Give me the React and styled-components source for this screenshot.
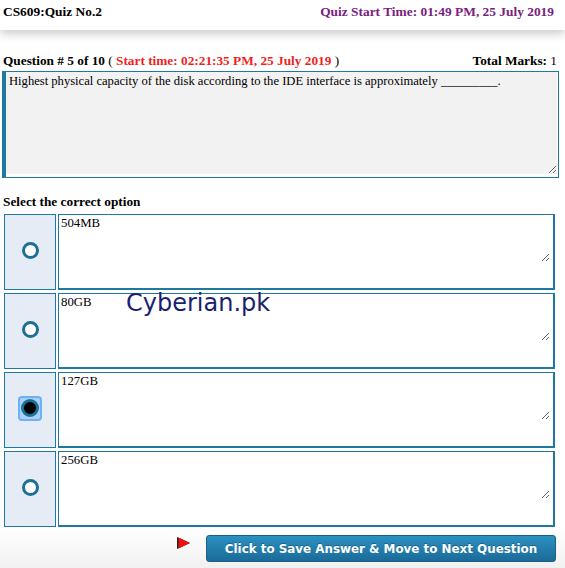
import React from "react";
import styled, { createGlobalStyle } from "styled-components";

const GlobalStyle = createGlobalStyle`
  body {
    margin: 0;
    background: #fff;
    font-family: "Liberation Serif", "Times New Roman", serif;
    color: #000;
  }
`;

const Page = styled.div`
  width: 565px;
  height: 568px;
  overflow: hidden;
  position: relative;
  display: flex;
  flex-direction: column;
`;

const Header = styled.div`
  height: 30px;
  display: flex;
  justify-content: space-between;
  align-items: flex-start;
  padding: 4px 11px 0 3px;
  box-sizing: border-box;
  background: #fff;
  box-shadow: 0 4px 10px rgba(0, 0, 0, 0.2);
  font-size: 13.4px;
  font-weight: bold;
`;

const StartTime = styled.span`
  color: #7a2080;
`;

const QuestionBar = styled.div`
  margin-top: 22px;
  display: flex;
  justify-content: space-between;
  padding: 0 8px 0 3px;
  font-size: 13.3px;
  line-height: 17px;
`;

const Strong = styled.b`
  color: ${(p) => p.color || "#000"};
`;

const QuestionBox = styled.div`
  margin: 2px 0 0 2px;
  width: 557px;
  height: 107px;
  box-sizing: border-box;
  border: 1px solid #1f78a0;
  border-left: 4px solid #1f78a0;
  padding: 0 1px 3px 0;
  display: flex;
`;

const QuestionText = styled.textarea`
  flex: 1;
  border: none;
  background: #f2f2f2;
  padding: 2px 3px;
  font-family: "Liberation Serif", "Times New Roman", serif;
  font-size: 12.6px;
  color: #000;
  resize: both;
  outline: none;
`;

const SectionTitle = styled.div`
  margin: 16px 0 0 3px;
  font-size: 13.3px;
  font-weight: bold;
  line-height: 16px;
`;

const Options = styled.div`
  margin: 4px 0 0 4px;
  width: 551px;
  display: flex;
  flex-direction: column;
  gap: 3px;
  position: relative;
`;

const OptionRow = styled.div`
  display: grid;
  grid-template-columns: 52px 1fr;
  gap: 2px;
  height: 76px;
`;

const RadioCell = styled.div`
  border: 1px solid #1f78a0;
  background: #e6ecf5;
  display: flex;
  align-items: center;
  justify-content: center;
  padding-bottom: 4px;
  box-sizing: border-box;
`;

const Radio = styled.span`
  width: 17px;
  height: 17px;
  box-sizing: border-box;
  border-radius: 50%;
  border: 3.5px solid #1e6f95;
  background: #fff;
`;

const FocusRing = styled.span`
  width: 24px;
  height: 25px;
  border-radius: 4px;
  border: 2px solid #6db1f2;
  background: #a9d0f6;
  box-sizing: border-box;
  display: flex;
  align-items: center;
  justify-content: center;
`;

const CheckedDot = styled.span`
  width: 18px;
  height: 18px;
  border-radius: 50%;
  box-sizing: border-box;
  border: 3px solid #1e6f95;
  background: #000;
`;

const AnswerCell = styled.div`
  border: 1px solid #1f78a0;
  border-width: 1px 2px 2px 1px;
  background: #fff;
  box-sizing: border-box;
`;

const AnswerText = styled.textarea`
  display: block;
  width: 491px;
  height: 47px;
  box-sizing: border-box;
  border: none;
  background: #fff;
  padding: 1px 2px;
  font-family: "Liberation Serif", "Times New Roman", serif;
  font-size: 12.8px;
  color: #000;
  outline: none;
  resize: both;
`;

const Watermark = styled.div`
  position: absolute;
  left: 122px;
  top: 75px;
  font-family: "DejaVu Sans", Verdana, sans-serif;
  font-size: 24px;
  color: #1b1f6e;
  pointer-events: none;
`;

const Footer = styled.div`
  flex: 1;
  display: flex;
  align-items: flex-start;
  justify-content: flex-end;
  gap: 15px;
  padding: 8px 9px 0 0;
  background: linear-gradient(#ffffff, #f1f1f1);
`;

const Arrow = styled.svg`
  margin-top: 2px;
`;

const SubmitButton = styled.button`
  width: 350px;
  height: 27px;
  border: 1px solid #1a5f86;
  border-radius: 3px;
  background: linear-gradient(#2a91c2, #1b6b98);
  color: #fff;
  font-family: "DejaVu Sans", Verdana, sans-serif;
  font-weight: bold;
  font-size: 11.9px;
  text-shadow: 0 -1px 0 rgba(0, 0, 0, 0.25);
  cursor: pointer;
`;

const answers = ["504MB", "80GB", "127GB", "256GB"];

export default function App() {
  return (
    <Page>
      <GlobalStyle />
      <Header>
        <span>CS609:Quiz No.2</span>
        <StartTime>Quiz Start Time: 01:49 PM, 25 July 2019</StartTime>
      </Header>
      <QuestionBar>
        <span>
          <Strong>Question # 5 of 10</Strong> ({" "}
          <Strong color="#f01f1f">Start time: 02:21:35 PM, 25 July 2019</Strong> )
        </span>
        <span>
          <Strong>Total Marks:</Strong> 1
        </span>
      </QuestionBar>
      <QuestionBox>
        <QuestionText
          readOnly
          value="Highest physical capacity of the disk according to the IDE interface is approximately _________."
        />
      </QuestionBox>
      <SectionTitle>Select the correct option</SectionTitle>
      <Options>
        {answers.map((a, i) => (
          <OptionRow key={a}>
            <RadioCell>
              {i === 2 ? (
                <FocusRing>
                  <CheckedDot />
                </FocusRing>
              ) : (
                <Radio />
              )}
            </RadioCell>
            <AnswerCell>
              <AnswerText readOnly value={a} />
            </AnswerCell>
          </OptionRow>
        ))}
        <Watermark>Cyberian.pk</Watermark>
      </Options>
      <Footer>
        <Arrow width="15" height="12" viewBox="0 0 15 12">
          <polygon points="1,0 14,6 1,12" fill="#222" />
          <polygon points="2.5,0.5 14,6 2.5,11.5" fill="#f01010" />
        </Arrow>
        <SubmitButton>Click to Save Answer &amp; Move to Next Question</SubmitButton>
      </Footer>
    </Page>
  );
}
